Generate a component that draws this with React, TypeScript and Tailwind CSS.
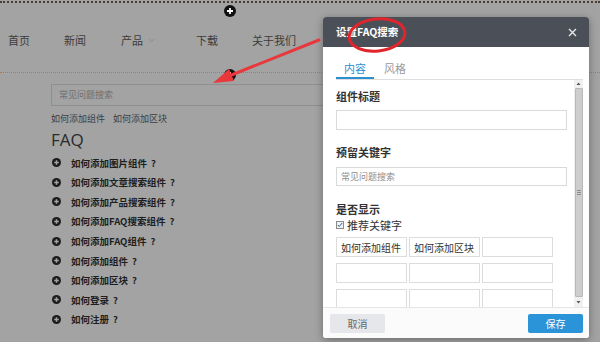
import { ChevronDown } from 'lucide-react';

const cjk = "font-['Noto_Sans_CJK_SC','Noto_Sans',sans-serif]";

const faqItems = [
  '如何添加图片组件',
  '如何添加文章搜索组件',
  '如何添加产品搜索组件',
  '如何添加FAQ搜索组件',
  '如何添加FAQ组件',
  '如何添加组件',
  '如何添加区块',
  '如何登录',
  '如何注册',
];

const keywordCells = ['如何添加组件', '如何添加区块', '', '', '', '', '', '', ''];

function PlusBadge({ className }: { className: string }) {
  return (
    <div className={`absolute w-[12px] h-[12px] rounded-full bg-[#111] flex items-center justify-center ${className}`}>
      <svg width="8" height="8" viewBox="0 0 8 8">
        <path d="M4 1v6M1 4h6" stroke="#fff" strokeWidth="1.8" />
      </svg>
    </div>
  );
}

function CirclePlus() {
  return (
    <svg width="9" height="9" viewBox="0 0 9 9" className="shrink-0">
      <circle cx="4.5" cy="4.5" r="4.5" fill="#1c1c1c" />
      <path d="M4.5 2.2v4.6M2.2 4.5h4.6" stroke="#a3a3a3" strokeWidth="1.5" />
    </svg>
  );
}

export default function App() {
  return (
    <div className={`relative w-[600px] h-[342px] overflow-hidden bg-[#a3a3a3] ${cjk}`}>
      {/* page behind the overlay */}
      <div className="mt-px border-t-2 border-dotted border-[#4b3d30]"></div>
      <nav className="flex items-start pl-[8px] pt-[29px] h-[69px] text-[11px] leading-[16px] text-[#3c3c3c]">
        <span className="w-[24px]">首页</span>
        <span className="ml-[32px] w-[24px]">新闻</span>
        <span className="ml-[33px] flex items-center w-[42px]">
          产品
          <ChevronDown size={9} strokeWidth={1.5} className="ml-[4px] text-[#7a7a7a]" />
        </span>
        <span className="ml-[33px] w-[24px]">下载</span>
        <span className="ml-[32px]">关于我们</span>
      </nav>
      <div className="border-t border-dotted border-[#b27a3e]"></div>

      <div className="pl-[51px] pt-[11px]">
        <div className="h-[22px] w-[300px] border border-[#8f8f8f] flex items-center pl-[7px] text-[9px] text-[#6e6e6e]">
          常见问题搜索
        </div>
        <div className="mt-[6px] h-[14px] leading-[14px] text-[9px] text-[#3e3e3e] flex gap-[8px]">
          <span>如何添加组件</span>
          <span>如何添加区块</span>
        </div>
        <div className="mt-[4px] h-[20px] leading-[20px] text-[17px] text-[#2a2a2a] font-['Open_Sans',sans-serif]">FAQ</div>
        <ul className="mt-[3px]">
          {faqItems.map((item) => (
            <li key={item} className="h-[19.6px] flex items-center pl-[1px] gap-[10px] text-[9.5px] font-bold text-[#1e1e1e]">
              <CirclePlus />
              <span>
                {item}
                <span className="ml-[4px]">?</span>
              </span>
            </li>
          ))}
        </ul>
      </div>

      <PlusBadge className="left-[224px] top-[5px]" />
      <PlusBadge className="left-[224px] top-[69px]" />

      {/* settings dialog */}
      <div className="absolute left-[323px] top-[17px] w-[266px] h-[321px] bg-white rounded-[3px] overflow-hidden shadow-[0_2px_8px_rgba(0,0,0,0.35)] flex flex-col">
        <div className="h-[31px] bg-[#4b5058] flex items-center justify-between pl-[13px] pr-[12px]">
          <span className="text-[10.5px] font-bold text-white">设置FAQ搜索</span>
          <svg width="9" height="9" viewBox="0 0 9 9">
            <path d="M1 1l7 7M8 1l-7 7" stroke="#e6e6e6" strokeWidth="1.4" />
          </svg>
        </div>

        <div className="pl-[13px] pr-[6px] flex flex-col flex-1">
          <div className="mt-[12px] flex border-b border-[#dedede] text-[11px]">
            <div className="w-[38px] h-[20px] leading-[18px] text-center text-[#2b8fd2] border-b-2 border-[#2b8fd2] -mb-px">内容</div>
            <div className="ml-[2px] w-[38px] h-[20px] leading-[18px] text-center text-[#9a9a9a]">风格</div>
          </div>

          <div className="h-[227px] flex">
            <div className="flex-1 overflow-hidden text-[#333]">
              <div className="mt-[8px] h-[16px] leading-[16px] text-[11px] font-semibold">组件标题</div>
              <div className="mt-[6px] h-[20px] w-[231px] border border-[#d9d9d9]"></div>
              <div className="mt-[14px] h-[16px] leading-[16px] text-[11px] font-semibold">预留关键字</div>
              <div className="mt-[7px] h-[19px] w-[231px] border border-[#d9d9d9] flex items-center pl-[4px] text-[9px] text-[#8d8d8d]">
                常见问题搜索
              </div>
              <div className="mt-[15px] h-[16px] leading-[16px] text-[11px] font-semibold">是否显示</div>
              <div className="mt-px h-[14px] flex items-center gap-[3px] text-[11px]">
                <span className="w-[8px] h-[8px] border border-[#8a8a8a] bg-[#eef3fa] flex items-center justify-center">
                  <svg width="6" height="6" viewBox="0 0 6 6">
                    <path d="M0.8 3l1.4 1.5L5.2 1" stroke="#3b5f8a" strokeWidth="1" fill="none" />
                  </svg>
                </span>
                <span>推荐关键字</span>
              </div>
              <div className="mt-[5px] grid grid-cols-[71px_71px_71px] gap-x-[2px] gap-y-[6px]">
                {keywordCells.map((text, i) => (
                  <div key={i} className="h-[20px] border border-[#dcdcdc] flex items-center pl-[4px] text-[10px] text-[#333]">
                    {text}
                  </div>
                ))}
              </div>
            </div>

            {/* scrollbar */}
            <div className="w-[9px] bg-[#f0f0f0] flex flex-col items-center">
              <svg width="9" height="8" viewBox="0 0 9 8">
                <path d="M2.5 5h4l-2-2.5z" fill="#555" />
              </svg>
              <div className="w-[8px] flex-1 bg-[#cdcdcd] border border-[#b9b9b9] rounded-[1px] flex flex-col items-center justify-center gap-px">
                <span className="w-[4px] h-px bg-[#8d8d8d]"></span>
                <span className="w-[4px] h-px bg-[#8d8d8d]"></span>
                <span className="w-[4px] h-px bg-[#8d8d8d]"></span>
              </div>
              <svg width="9" height="10" viewBox="0 0 9 10">
                <path d="M2.5 4h4l-2 2.5z" fill="#555" />
              </svg>
            </div>
          </div>
        </div>

        <div className="h-[31px] border-t border-[#e6e6e6] bg-[#fbfbfb] flex items-center justify-between pl-[7px] pr-[6px]">
          <button className="w-[55px] h-[19px] rounded-[2px] bg-[#e6e7ea] text-[10px] text-[#666]">取消</button>
          <button className="w-[55px] h-[19px] rounded-[2px] bg-[#2b94d9] text-[10px] text-white">保存</button>
        </div>
      </div>

      {/* red annotations */}
      <svg className="absolute inset-0 pointer-events-none" width="600" height="342" viewBox="0 0 600 342">
        <path d="M319 40 L229 76" stroke="#e8383c" strokeWidth="3" strokeLinecap="round" />
        <path d="M213 83 L234 81 L229 69 Z" fill="#e8383c" />
        <ellipse cx="377" cy="35" rx="28" ry="16" transform="rotate(-6 377 35)" fill="none" stroke="#e0252c" strokeWidth="3" />
      </svg>
    </div>
  );
}
